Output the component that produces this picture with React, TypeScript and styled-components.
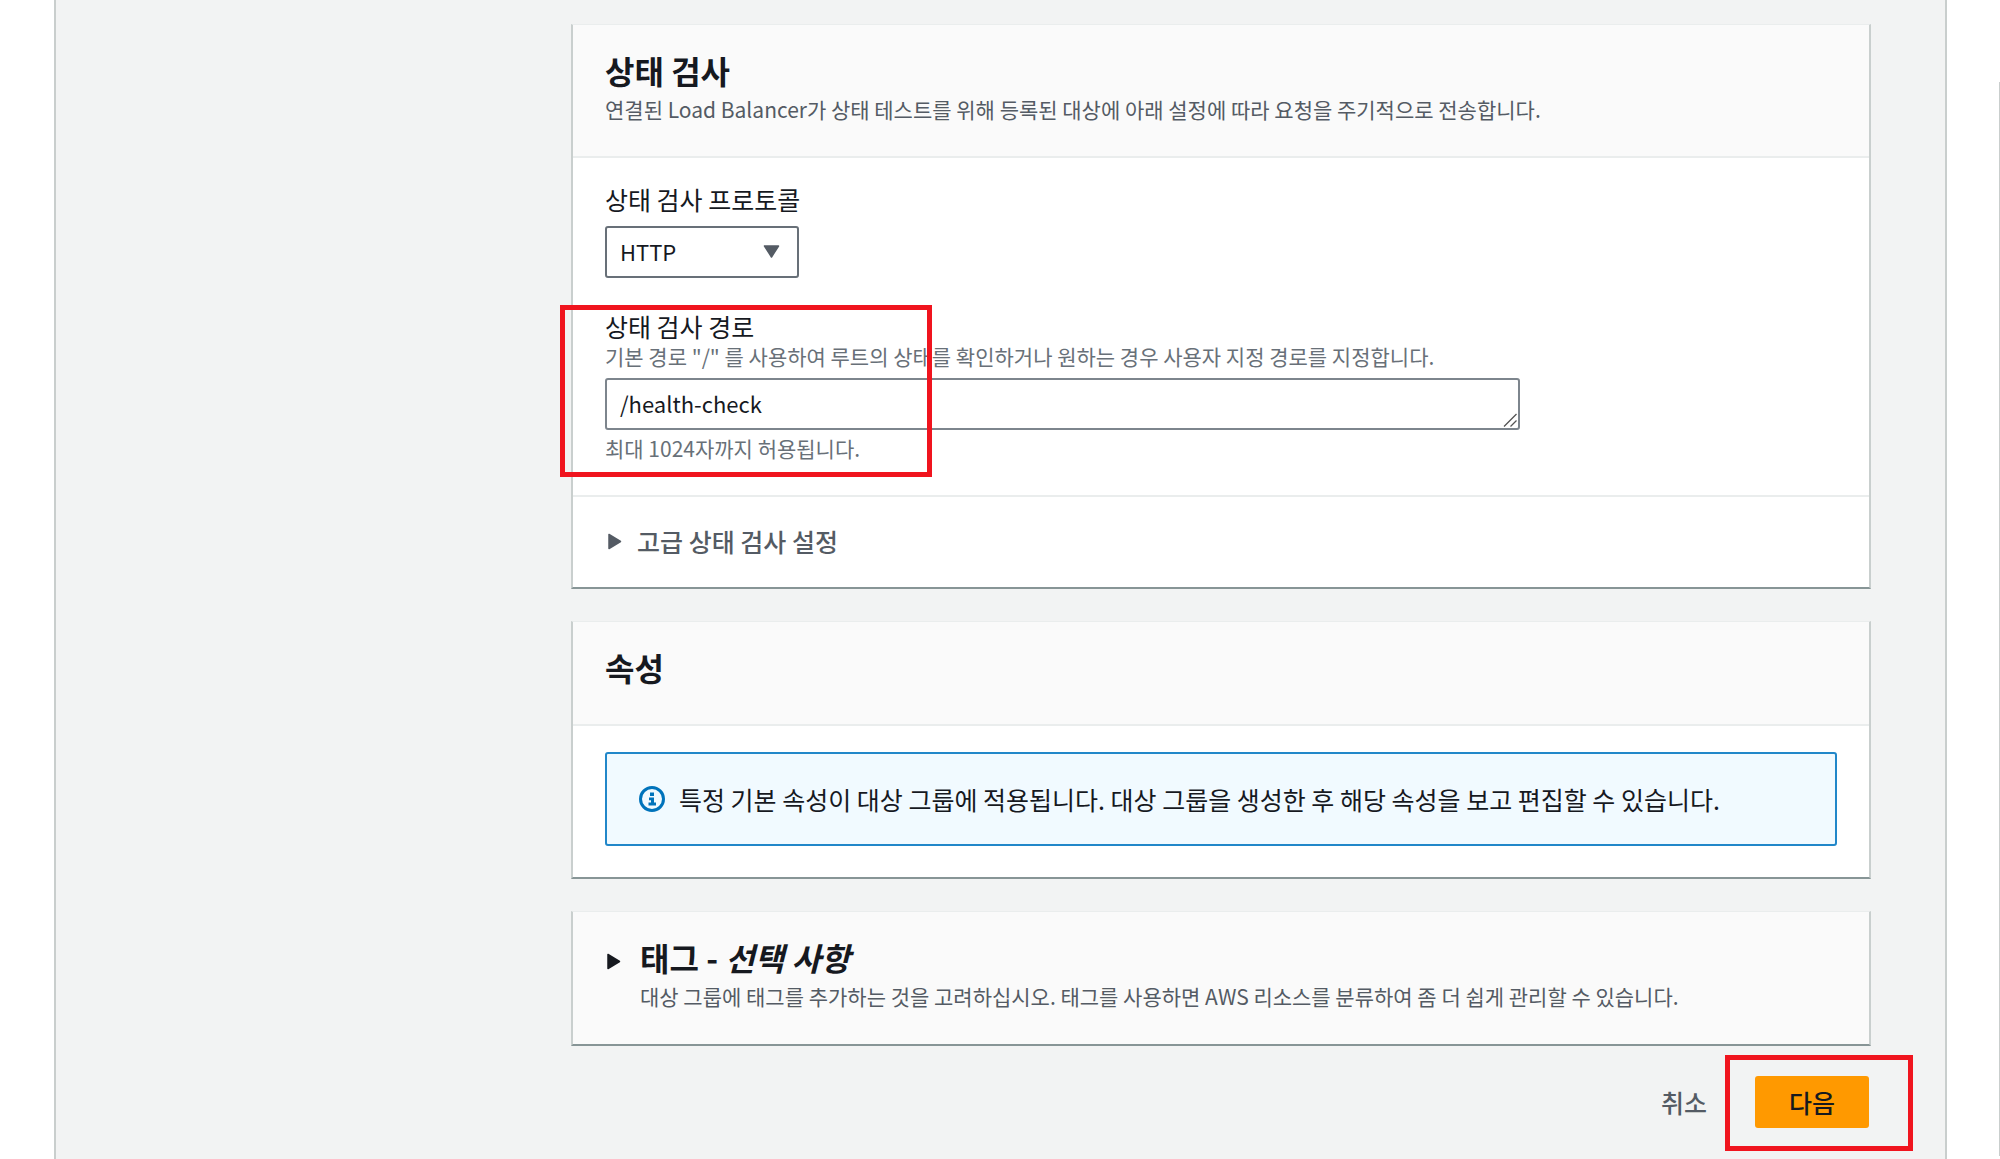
import React, { useState } from 'react';
import styled, { createGlobalStyle } from 'styled-components';

const GlobalStyle = createGlobalStyle`
  *, *::before, *::after { box-sizing: border-box; }
  body {
    margin: 0;
    background: #fff;
    color: #16191f;
    font-family: "Noto Sans CJK KR", "Noto Sans", sans-serif;
    font-size: 25px;
    line-height: 30px;
  }
  button, select, textarea { font: inherit; color: inherit; }
  h2, p { margin: 0; }
`;

const Page = styled.div`
  display: flex;
  min-height: 100vh;
  padding-left: 54px;
`;

const Main = styled.main`
  flex: 1;
  min-width: 0;
  padding: 24px 74px 31px 515px;
  background: #f2f3f3;
  border-left: 2px solid #c9cecd;
  border-right: 2px solid #c9cecd;
`;

const SidePanel = styled.aside`
  flex: 0 0 53px;
  margin: 82px 0 3px;
  border-right: 1px solid #c9cecd;
`;

const Stack = styled.div`
  display: flex;
  flex-direction: column;
  gap: 32px;
`;

const Card = styled.section`
  background: #fff;
  border: 2px solid #c9cfce;
  border-top: 1px solid #eaeded;
  border-bottom-color: #879596;
`;

const CardHeader = styled.header<{ $divided?: boolean }>`
  display: flex;
  gap: 19px;
  min-height: 104px;
  padding: 25px 32px ${(p) => (p.$divided ? '33px' : '34px')};
  background: #fafafa;
  border-bottom: ${(p) => (p.$divided ? '2px solid #eaeded' : '0')};
`;

const Heading = styled.h2`
  font-size: 32px;
  line-height: 40px;
  font-weight: 700;
`;

const Description = styled.p`
  padding-top: 5px;
  font-size: 21px;
  line-height: 28px;
  color: #545b64;
`;

const Form = styled.div`
  display: flex;
  flex-direction: column;
  gap: 33px;
  padding: 26px 32px 33px;
`;

const Field = styled.div`
  position: relative;
  display: flex;
  flex-direction: column;
  align-items: flex-start;
`;

const Label = styled.label`
  display: block;
`;

const Hint = styled.p`
  padding: 1px 0 8px;
  font-size: 21px;
  line-height: 28px;
  color: #687078;
`;

const Constraint = styled(Hint)`
  padding: 4px 0 0;
`;

const SelectBox = styled.div`
  position: relative;
  width: 194px;
  margin-top: 12px;

  svg {
    position: absolute;
    right: 19px;
    top: 19px;
    pointer-events: none;
  }
`;

const Select = styled.select`
  display: block;
  width: 100%;
  height: 52px;
  padding: 0 13px 2px;
  appearance: none;
  background: #fff;
  border: 2px solid #687078;
  border-radius: 3px;
  font-size: 22px;
`;

const PathBox = styled.div`
  position: relative;
  width: 100%;
  max-width: 915px;

  svg {
    position: absolute;
    right: 3px;
    bottom: 3px;
    pointer-events: none;
  }
`;

const PathInput = styled.textarea`
  display: block;
  width: 100%;
  height: 52px;
  padding: 8px 13px;
  overflow: hidden;
  resize: none;
  background: #fff;
  border: 2px solid #7d858d;
  border-radius: 3px;
  font-size: 22px;
`;

const Marker = styled.div`
  position: absolute;
  border: 5px solid #f0141e;
  pointer-events: none;
`;

const FieldMarker = styled(Marker)`
  top: -6px;
  left: -45px;
  width: 372px;
  height: 172px;
`;

const ButtonMarker = styled(Marker)`
  inset: -21px -44px -23px -30px;
`;

const Expander = styled.div`
  padding: 29px 32px 31px;
  border-top: 2px solid #eaeded;
`;

const ExpandButton = styled.button`
  display: flex;
  align-items: center;
  gap: 15px;
  padding: 0 0 0 3px;
  background: none;
  border: 0;
  color: #545b64;
  font-weight: 500;
`;

const IconToggle = styled.button`
  display: flex;
  align-self: flex-start;
  padding: 16px 0 0 2px;
  background: none;
  border: 0;
`;

const CardBody = styled.div`
  padding: 26px 32px 31px;
`;

const Alert = styled.div`
  display: flex;
  align-items: center;
  gap: 14px;
  padding: 30px 32px;
  background: #f1faff;
  border: 2px solid #2187c9;
  border-radius: 3px;
`;

const Actions = styled.div`
  display: flex;
  justify-content: flex-end;
  align-items: center;
  gap: 48px;
  padding: 30px 2px 0 0;
`;

const CancelLink = styled.a`
  color: #545b64;
  font-weight: 500;
  text-decoration: none;
`;

const NextSlot = styled.div`
  position: relative;
`;

const NextButton = styled.button`
  display: block;
  height: 52px;
  padding: 0 34px;
  background: #ff9900;
  border: 0;
  border-radius: 3px;
  font-weight: 500;
`;

const DownTriangle = () => (
  <svg width="17" height="14" viewBox="0 0 17 14" aria-hidden="true">
    <path d="M1.5 1h14L8.500 12z" fill="#545b64" stroke="#545b64" strokeWidth="1.5" strokeLinejoin="round" />
  </svg>
);

const RightTriangle = ({ color }: { color: string }) => (
  <svg width="14" height="17" viewBox="0 0 14 17" aria-hidden="true">
    <path d="M1 1.500v14L12.500 8.500z" fill={color} stroke={color} strokeWidth="1.5" strokeLinejoin="round" />
  </svg>
);

const InfoIcon = () => (
  <svg width="26" height="26" viewBox="0 0 26 26" fill="none" aria-hidden="true">
    <circle cx="13" cy="13" r="11.500" stroke="#0073bb" strokeWidth="3" />
    <path d="M11 6.500h4v3.500h-4zM10 11.500h5v5h2v3h-7.500v-3H12v-2.200h-2z" fill="#0073bb" />
  </svg>
);

const ResizeGrip = () => (
  <svg width="14" height="14" viewBox="0 0 14 14" fill="none" aria-hidden="true">
    <path d="M1 13.500L13.500 1M7.500 13.500L13.500 7.500" stroke="#555" strokeWidth="1.300" />
  </svg>
);

export default function App() {
  const [protocol, setProtocol] = useState('HTTP');
  const [path, setPath] = useState('/health-check');

  return (
    <>
      <GlobalStyle />
      <Page>
        <Main>
          <Stack>
            <Card>
              <CardHeader $divided>
                <div>
                  <Heading>상태 검사</Heading>
                  <Description>
                    연결된 Load Balancer가 상태 테스트를 위해 등록된 대상에 아래 설정에 따라 요청을 주기적으로 전송합니다.
                  </Description>
                </div>
              </CardHeader>
              <Form>
                <Field>
                  <Label htmlFor="protocol">상태 검사 프로토콜</Label>
                  <SelectBox>
                    <Select id="protocol" value={protocol} onChange={(e) => setProtocol(e.target.value)}>
                      <option>HTTP</option>
                      <option>HTTPS</option>
                    </Select>
                    <DownTriangle />
                  </SelectBox>
                </Field>
                <Field>
                  <Label htmlFor="path">상태 검사 경로</Label>
                  <Hint id="path-hint">
                    기본 경로 "/" 를 사용하여 루트의 상태를 확인하거나 원하는 경우 사용자 지정 경로를 지정합니다.
                  </Hint>
                  <PathBox>
                    <PathInput
                      id="path"
                      rows={1}
                      aria-describedby="path-hint path-limit"
                      value={path}
                      onChange={(e) => setPath(e.target.value)}
                    />
                    <ResizeGrip />
                  </PathBox>
                  <Constraint id="path-limit">최대 1024자까지 허용됩니다.</Constraint>
                  <FieldMarker />
                </Field>
              </Form>
              <Expander>
                <ExpandButton type="button" aria-expanded={false}>
                  <RightTriangle color="#545b64" />
                  고급 상태 검사 설정
                </ExpandButton>
              </Expander>
            </Card>

            <Card>
              <CardHeader $divided>
                <Heading>속성</Heading>
              </CardHeader>
              <CardBody>
                <Alert role="status">
                  <InfoIcon />
                  <p>특정 기본 속성이 대상 그룹에 적용됩니다. 대상 그룹을 생성한 후 해당 속성을 보고 편집할 수 있습니다.</p>
                </Alert>
              </CardBody>
            </Card>

            <Card>
              <CardHeader>
                <IconToggle type="button" aria-label="태그" aria-expanded={false}>
                  <RightTriangle color="#16191f" />
                </IconToggle>
                <div>
                  <Heading>
                    태그 - <em>선택 사항</em>
                  </Heading>
                  <Description>
                    대상 그룹에 태그를 추가하는 것을 고려하십시오. 태그를 사용하면 AWS 리소스를 분류하여 좀 더 쉽게 관리할 수 있습니다.
                  </Description>
                </div>
              </CardHeader>
            </Card>
          </Stack>
          <Actions>
            <CancelLink href="#">취소</CancelLink>
            <NextSlot>
              <NextButton type="button">다음</NextButton>
              <ButtonMarker />
            </NextSlot>
          </Actions>
        </Main>
        <SidePanel />
      </Page>
    </>
  );
}
